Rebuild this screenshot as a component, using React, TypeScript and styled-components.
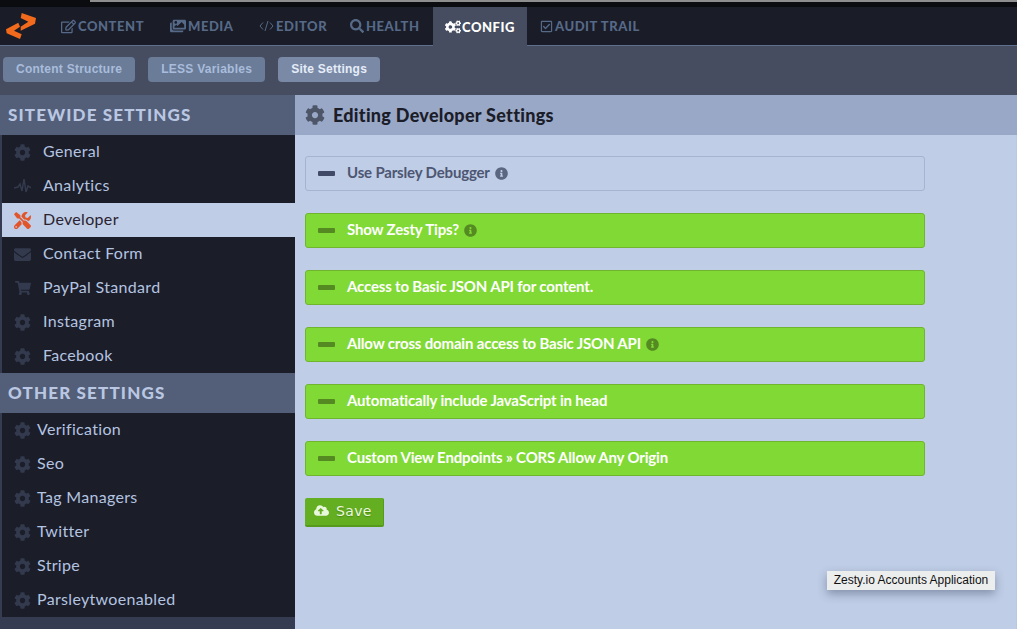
import React from "react";
import styled, { createGlobalStyle } from "styled-components";
import {
  FaCog,
  FaCogs,
  FaEnvelope,
  FaImages,
  FaInfoCircle,
  FaRegCheckSquare,
  FaRegEdit,
  FaSearch,
  FaShoppingCart,
  FaTools,
  FaCloudUploadAlt,
} from "react-icons/fa";

const GlobalStyle = createGlobalStyle`
  html, body {
    margin: 0;
    padding: 0;
    height: 100%;
    overflow: hidden;
    background: #bfcde6;
  }
`;

const navItems = [
  { label: "CONTENT", icon: <FaRegEdit size={15} />, width: 110, inset: 11 },
  { label: "MEDIA", icon: <FaImages size={16} />, width: 88, inset: 10 },
  { label: "EDITOR", icon: <CodeIcon />, width: 92, inset: 11 },
  { label: "HEALTH", icon: <FaSearch size={14} />, width: 93, inset: 10 },
  { label: "CONFIG", icon: <FaCogs size={16} />, width: 94, inset: 12, active: true },
  { label: "AUDIT TRAIL", icon: <FaRegCheckSquare size={13} />, width: 120, inset: 13 },
];

const sitewide = [
  { label: "General", icon: "gear" },
  { label: "Analytics", icon: "pulse" },
  { label: "Developer", icon: "tools", active: true },
  { label: "Contact Form", icon: "mail" },
  { label: "PayPal Standard", icon: "cart" },
  { label: "Instagram", icon: "gear" },
  { label: "Facebook", icon: "gear" },
];

const other = ["Verification", "Seo", "Tag Managers", "Twitter", "Stripe", "Parsleytwoenabled"];

const toggles = [
  { label: "Use Parsley Debugger", on: false, info: true },
  { label: "Show Zesty Tips?", on: true, info: true },
  { label: "Access to Basic JSON API for content.", on: true, info: false },
  { label: "Allow cross domain access to Basic JSON API", on: true, info: true },
  { label: "Automatically include JavaScript in head", on: true, info: false },
  { label: "Custom View Endpoints » CORS Allow Any Origin", on: true, info: false },
];

function CodeIcon() {
  return (
    <svg width="15" height="12" viewBox="0 0 15 12" fill="none" stroke="currentColor" strokeWidth="1">
      <path d="M4 2.5 L1 6 L4 9.5" />
      <path d="M9 1 L6 11" />
      <path d="M11 2.5 L14 6 L11 9.5" />
    </svg>
  );
}

function Logo() {
  return (
    <svg width="31" height="27" viewBox="0 0 31 27" fill="#f26a1b">
      <path d="M15.7 0 L30 5 L29 10.7 L14.7 17.7 L14.7 13.7 L22.3 8.7 L14.7 5 Z" />
      <path d="M12.3 9.7 L0 16.3 L0.7 20.3 L14 26 L15.7 21.3 L8 17.7 L14 13.7 Z" />
    </svg>
  );
}

function PulseIcon() {
  return (
    <svg width="17" height="16" viewBox="0 0 17 16" fill="none" stroke="currentColor" strokeWidth="1.5">
      <path d="M0 10 L4 9 L6 6 L8 13 L10 1 L12 14 L14 8 L17 10" />
    </svg>
  );
}

const sideIcon = (name: string) => {
  if (name === "pulse") return <PulseIcon />;
  if (name === "tools") return <FaTools size={17} />;
  if (name === "mail") return <FaEnvelope size={17} />;
  if (name === "cart") return <FaShoppingCart size={16} />;
  return <FaCog size={17} />;
};

const App = () => {
  return (
    <Page>
      <GlobalStyle />
      <TopStrip>
        <StripLight />
      </TopStrip>
      <Nav>
        <LogoWrap>
          <Logo />
        </LogoWrap>
        {navItems.map((item) => (
          <NavItem key={item.label} $active={item.active} $width={item.width} $inset={item.inset}>
            {item.icon}
            <span>{item.label}</span>
          </NavItem>
        ))}
      </Nav>
      <SubBar>
        <SubButton>Content Structure</SubButton>
        <SubButton>LESS Variables</SubButton>
        <SubButton $active>Site Settings</SubButton>
      </SubBar>
      <Main>
        <Sidebar>
          <SideHeading>SITEWIDE SETTINGS</SideHeading>
          <SideList>
            {sitewide.map((item) => (
              <SideItem key={item.label} $active={item.active}>
                <SideIcon $active={item.active}>{sideIcon(item.icon)}</SideIcon>
                <SideLabel $offset={12}>{item.label}</SideLabel>
              </SideItem>
            ))}
          </SideList>
          <SideHeading>OTHER SETTINGS</SideHeading>
          <SideList>
            {other.map((label) => (
              <SideItem key={label}>
                <SideIcon>
                  <FaCog size={17} />
                </SideIcon>
                <SideLabel $offset={6}>{label}</SideLabel>
              </SideItem>
            ))}
          </SideList>
        </Sidebar>
        <Content>
          <ContentHeader>
            <FaCog size={20} color="#4d5568" />
            <span>Editing Developer Settings</span>
          </ContentHeader>
          <Form>
            {toggles.map((toggle) => (
              <ToggleRow key={toggle.label} $on={toggle.on}>
                <Dash $on={toggle.on} />
                <ToggleLabel>{toggle.label}</ToggleLabel>
                {toggle.info && (
                  <InfoMark $on={toggle.on}>
                    <FaInfoCircle size={13} />
                  </InfoMark>
                )}
              </ToggleRow>
            ))}
            <SaveButton>
              <FaCloudUploadAlt size={15} />
              <span>Save</span>
            </SaveButton>
          </Form>
        </Content>
      </Main>
      <Tooltip>Zesty.io Accounts Application</Tooltip>
    </Page>
  );
};

const Page = styled.div`
  position: relative;
  width: 1017px;
  height: 629px;
  overflow: hidden;
  display: flex;
  flex-direction: column;
  background: #bfcde6;
  font-family: Lato, "Liberation Sans", sans-serif;
`;

const TopStrip = styled.div`
  height: 7px;
  background: #0b0c10;
  display: flex;
  justify-content: flex-end;
  flex-shrink: 0;
`;

const StripLight = styled.div`
  width: 927px;
  height: 2px;
  background: #8e8e8e;
`;

const Nav = styled.nav`
  height: 38px;
  display: flex;
  align-items: stretch;
  background: #1a1c28;
  border-bottom: 1px solid #5e6f8d;
  flex-shrink: 0;
`;

const LogoWrap = styled.div`
  width: 50px;
  padding: 6px 0 0 6px;
  box-sizing: border-box;
`;

const NavItem = styled.div<{ $active?: boolean; $width: number; $inset: number }>`
  width: ${(p) => p.$width}px;
  height: ${(p) => (p.$active ? "39px" : "38px")};
  display: flex;
  align-items: center;
  gap: ${(p) => (p.$active ? "1px" : "2px")};
  box-sizing: border-box;
  padding-left: ${(p) => p.$inset}px;
  color: ${(p) => (p.$active ? "#ffffff" : "#566a88")};
  background: ${(p) => (p.$active ? "#474d60" : "transparent")};
  font-size: 13px;
  font-weight: 900;
  letter-spacing: 0.55px;
  white-space: nowrap;
  position: relative;
  z-index: 1;
`;

const SubBar = styled.div`
  height: 49px;
  display: flex;
  align-items: flex-start;
  gap: 13px;
  padding: 11px 0 0 3px;
  box-sizing: border-box;
  background: #474d60;
  flex-shrink: 0;
`;

const SubButton = styled.div<{ $active?: boolean }>`
  height: 25px;
  padding: 0 13px 1px;
  box-sizing: border-box;
  display: flex;
  align-items: center;
  border-radius: 4px;
  background: ${(p) => (p.$active ? "#7a8aa6" : "#6a7c98")};
  color: ${(p) => (p.$active ? "#e6edf9" : "#a9bcdc")};
  font-size: 12px;
  font-weight: 700;
  letter-spacing: 0.25px;
  font-family: "Liberation Sans", sans-serif;
`;

const Main = styled.div`
  flex: 1;
  display: flex;
  min-height: 0;
  box-shadow: inset 0 3px 3px -2px rgba(20, 24, 36, 0.5);
`;

const Sidebar = styled.aside`
  width: 295px;
  flex-shrink: 0;
  background: #353c52;
  display: flex;
  flex-direction: column;
`;

const SideHeading = styled.h2`
  margin: 0;
  height: 40px;
  padding: 0 0 2px 8px;
  display: flex;
  align-items: center;
  box-sizing: border-box;
  background: #535e78;
  color: #b9c7e2;
  font-size: 17px;
  font-weight: 900;
  letter-spacing: 1.15px;
`;

const SideList = styled.ul`
  margin: 0 0 0 2px;
  padding: 0;
  list-style: none;
  background: #1b1d29;
`;

const SideItem = styled.li<{ $active?: boolean }>`
  height: 34px;
  display: flex;
  align-items: center;
  padding-left: 12px;
  background: ${(p) => (p.$active ? "#bfcde6" : "transparent")};
  color: ${(p) => (p.$active ? "#2a2230" : "#b4c4e0")};
`;

const SideIcon = styled.span<{ $active?: boolean }>`
  width: 17px;
  display: flex;
  justify-content: center;
  color: ${(p) => (p.$active ? "#e2552a" : "#333a4d")};
`;

const SideLabel = styled.span<{ $offset: number }>`
  margin: 0 0 4px ${(p) => p.$offset}px;
  font-size: 16px;
  letter-spacing: 0.32px;
`;

const Content = styled.main`
  flex: 1;
  display: flex;
  flex-direction: column;
`;

const ContentHeader = styled.header`
  height: 40px;
  display: flex;
  align-items: center;
  gap: 8px;
  padding: 0 0 1px 10px;
  box-sizing: border-box;
  background: #9aa8c8;
  color: #1b1d29;
  font-size: 18px;
  font-weight: 900;
  letter-spacing: 0.28px;
`;

const Form = styled.form`
  display: flex;
  flex-direction: column;
  align-items: flex-start;
  gap: 22px;
  padding: 21px 0 0 10px;
`;

const ToggleRow = styled.div<{ $on: boolean }>`
  width: 620px;
  height: 35px;
  display: flex;
  align-items: center;
  box-sizing: border-box;
  padding-left: 12px;
  border-radius: 3px;
  border: 1px solid ${(p) => (p.$on ? "#6fb52e" : "#a6b4d2")};
  background: ${(p) => (p.$on ? "#80d935" : "#bfcde6")};
  color: ${(p) => (p.$on ? "#ffffff" : "#4d5672")};
  font-size: 15px;
  font-weight: 700;
  letter-spacing: -0.17px;
`;

const ToggleLabel = styled.span`
  margin-bottom: 3px;
`;

const Dash = styled.i<{ $on: boolean }>`
  width: 17px;
  height: 5px;
  margin-right: 12px;
  border-radius: 1px;
  background: ${(p) => (p.$on ? "#558a22" : "#414b68")};
`;

const InfoMark = styled.span<{ $on: boolean }>`
  display: flex;
  margin-left: 5px;
  color: ${(p) => (p.$on ? "#558a22" : "#5b6680")};
`;

const SaveButton = styled.button`
  width: 79px;
  height: 29px;
  padding: 0 0 2px 9px;
  display: flex;
  align-items: center;
  gap: 7px;
  border: 0;
  border-bottom: 2px solid #569a1c;
  border-right: 1px solid #569a1c;
  border-radius: 2px;
  background: #63ae21;
  color: #e9f7dc;
  font-family: "DejaVu Sans", sans-serif;
  font-size: 14px;
  letter-spacing: 0.35px;
  text-shadow: 0 1px 1px rgba(40, 70, 10, 0.35);
`;

const Tooltip = styled.div`
  position: absolute;
  left: 827px;
  top: 571px;
  width: 168px;
  height: 19px;
  padding-bottom: 1px;
  box-sizing: border-box;
  display: flex;
  align-items: center;
  justify-content: center;
  background: #eceeee;
  color: #111;
  font-family: "Liberation Sans", sans-serif;
  font-size: 12px;
  box-shadow: 0 4px 10px rgba(60, 70, 100, 0.45);
`;

export default App;
